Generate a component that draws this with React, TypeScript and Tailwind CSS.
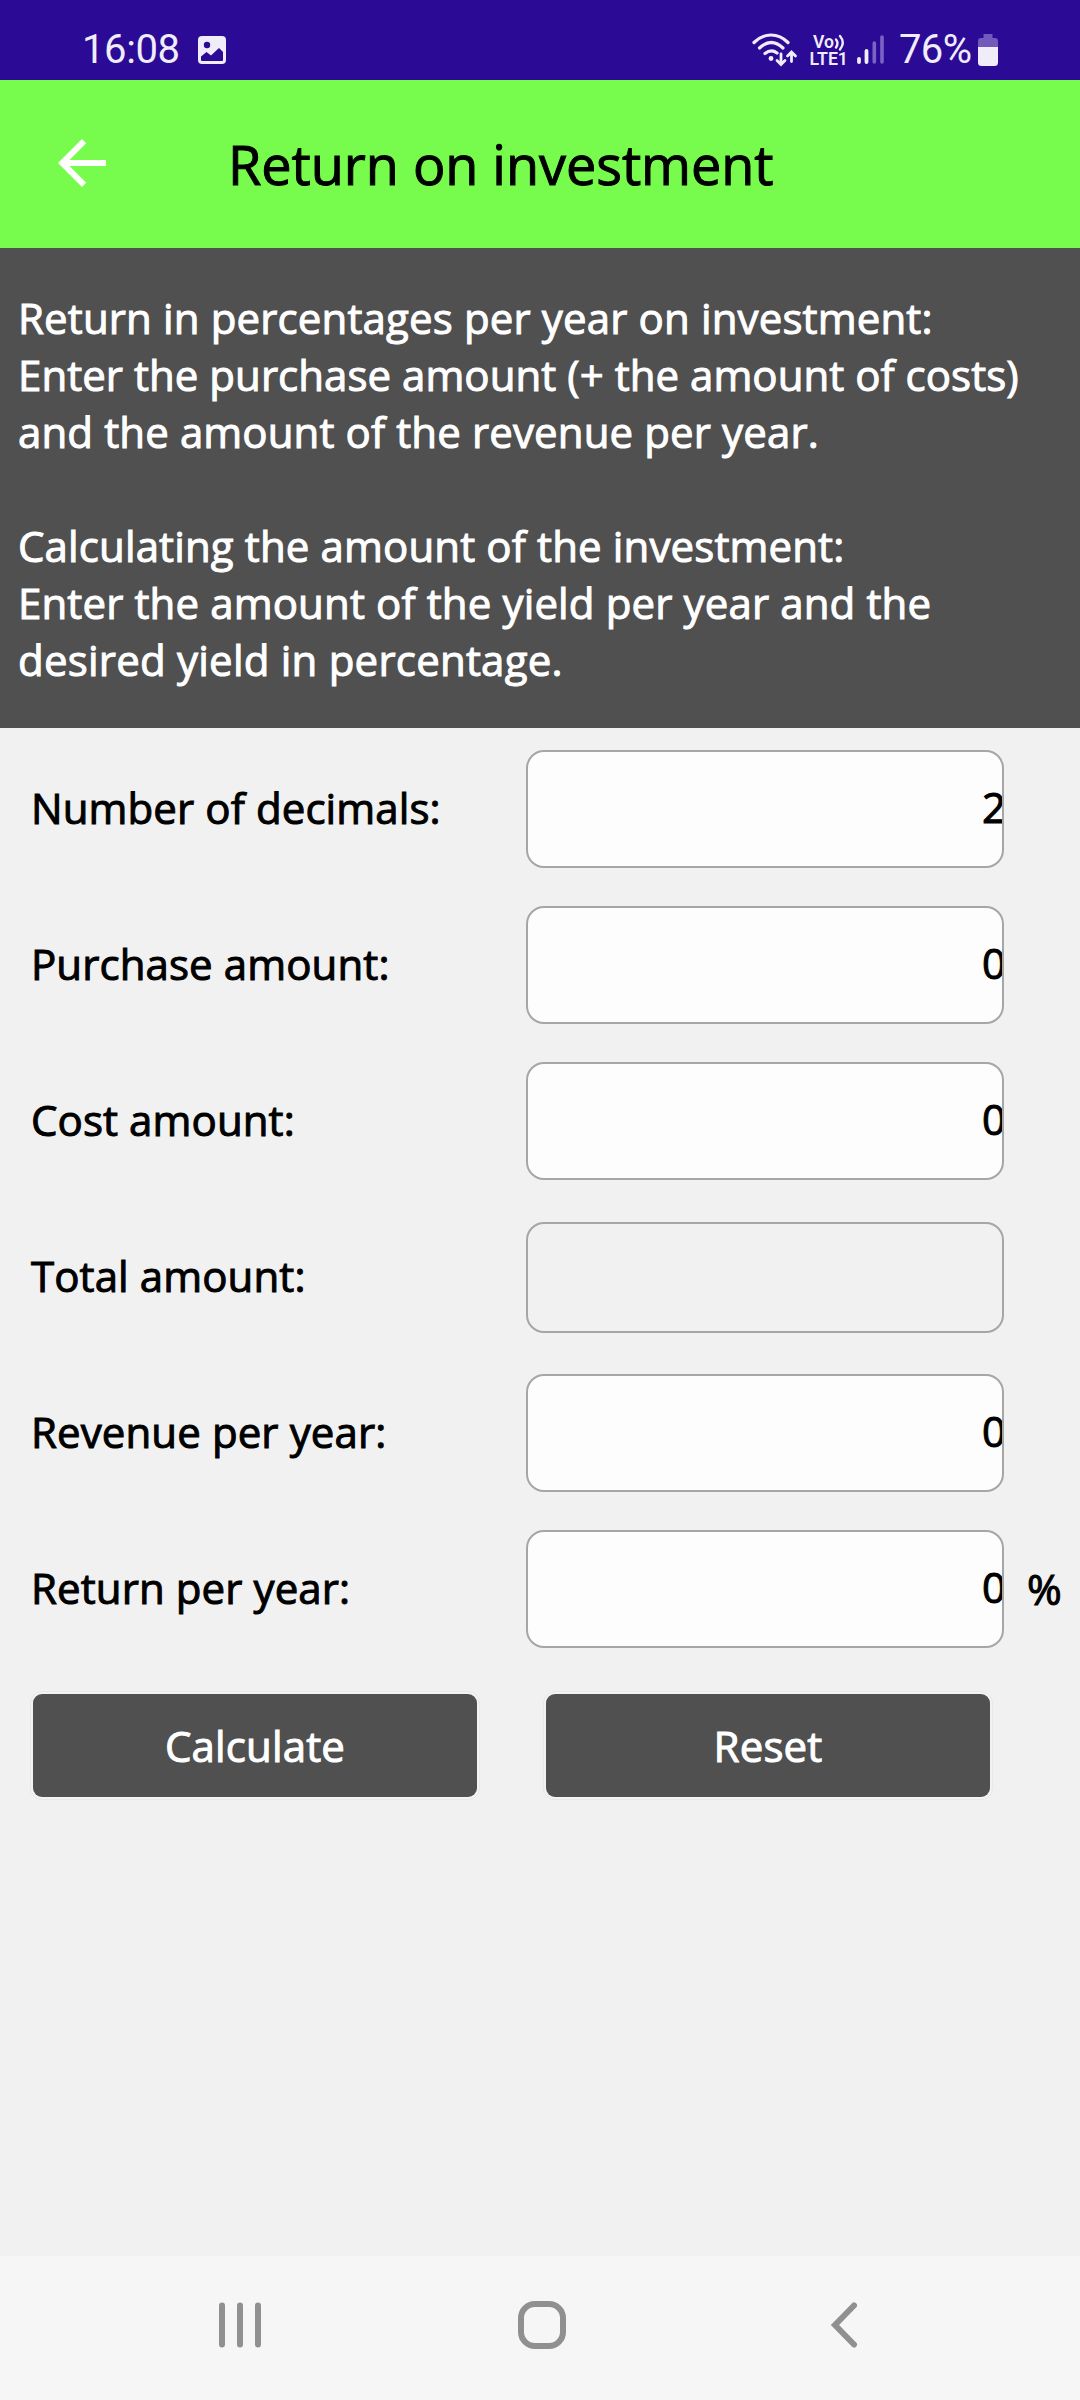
import React from 'react';

const fields = [
  { label: 'Number of decimals:', value: '2' },
  { label: 'Purchase amount:', value: '0' },
  { label: 'Cost amount:', value: '0' },
  { label: 'Total amount:', readOnly: true },
  { label: 'Revenue per year:', value: '0' },
  { label: 'Return per year:', value: '0', unit: '%' },
];

function StatusIcons() {
  return (
    <svg className="ml-auto mr-[72px] shrink-0" width="262" height="80" viewBox="746 0 262 80" fill="none" stroke="#f0ecfa" strokeLinecap="round">
      <path d="M754 42.500C764 32.500 778 32.500 788 42.500M759.500 48C767.500 40.500 775 40.500 783 48M765 53.500C769.500 50 773 50 777 53" strokeWidth="3.200" />
      <path d="M781 54v10M777 60.500l4 4 4-4M791.500 61.500v-9M787.500 56l4-4 4 4" strokeWidth="2.800" />
      <circle cx="771" cy="58.500" r="2.400" fill="#f0ecfa" stroke="none" />
      <g fill="#f0ecfa" stroke="none" fontFamily="Roboto, sans-serif" fontWeight="600">
        <text x="813" y="48" fontSize="17.500" textLength="21" lengthAdjust="spacingAndGlyphs">Vo</text>
        <text x="809.500" y="65" fontSize="18.500" textLength="38.500" lengthAdjust="spacingAndGlyphs">LTE1</text>
        <text x="899" y="63" fontSize="40" fontWeight="400" textLength="73">76%</text>
      </g>
      <path d="M836 39.500q3 3.500 0 8M840 36q5.500 6.500 0 13.500" strokeWidth="2.400" />
      <path d="M859 59v3M866.500 51v11" strokeWidth="3.800" />
      <path d="M874.300 43v19M882 37v25" strokeWidth="3.600" stroke="#7a63c4" />
      <path d="M983.500 34h9v4h2.500q3 0 3 3v6h-20v-6q0-3 3-3h2.500z" fill="#7259bb" stroke="none" />
      <path d="M978 47h20v15.500q0 3.500-3.500 3.500h-13q-3.500 0-3.500-3.500z" fill="#f0ecfa" stroke="none" />
    </svg>
  );
}

function ActionButton({ children }: { children: React.ReactNode }) {
  return (
    <button className="flex h-[109px] w-[450px] items-center justify-center rounded-[12px] border border-[#e8e8e8] bg-[#f3f3f3] p-[2px]">
      <span className="flex h-[103px] w-[444px] items-center justify-center rounded-[9px] bg-[#505050] text-white">
        <span className="-mt-px tracking-[0.15px]">{children}</span>
      </span>
    </button>
  );
}

export default function App() {
  return (
    <div className="flex h-[2400px] w-[1080px] flex-col overflow-hidden bg-[#f1f1f1] font-['Open_Sans',sans-serif] text-black [-webkit-text-stroke:1px_currentColor]">
      <div className="flex h-20 shrink-0 items-center bg-[#2b0a96] pl-[82px] font-['Roboto',sans-serif] text-[40px] text-[#f0ecfa] [-webkit-text-stroke:0px]">
        <span className="mt-[19px] w-[116px] tracking-[-0.4px]">16:08</span>
        <svg className="mt-5 shrink-0" width="28" height="28" viewBox="0 0 28 28">
          <rect width="28" height="28" rx="4" fill="#f0ecfa" />
          <circle cx="9" cy="9" r="3.200" fill="#2b0a96" />
          <path d="M3 20.500l5.500-4.500 4.500 3.500 8-7.500 4 4v8q0 1-1 1H4q-1 0-1-1z" fill="#2b0a96" />
        </svg>
        <StatusIcons />
      </div>
      <header className="flex h-[168px] shrink-0 items-center bg-[#77fc4d]">
        <svg className="-mt-[3px] ml-[46px] mr-[110px] shrink-0" width="72" height="72" viewBox="0 0 24 24" fill="#fff">
          <path d="M20 11H7.830l5.590-5.590L12 4l-8 8 8 8 1.410-1.410L7.830 13H20z" />
        </svg>
        <h1 className="text-[54px] tracking-[-0.05px]">Return on investment</h1>
      </header>
      <section className="h-[480px] shrink-0 bg-[#505050] pl-[18px] pt-[41px] text-[42px] leading-[57px] text-white">
        <p>
          <span className="tracking-[0.14px]">Return in percentages per year on investment:</span><br />
          <span className="tracking-[0.04px]">Enter the purchase amount (+ the amount of costs)</span><br />
          <span className="tracking-[0.12px]">and the amount of the revenue per year.</span>
        </p>
        <p className="mt-[57px] tracking-[0.13px]">
          Calculating the amount of the investment:<br />
          Enter the amount of the yield per year and the<br />
          <span className="tracking-[0.22px]">desired yield in percentage.</span>
        </p>
      </section>
      <main className="flex-1 pt-[3px] text-[42px]">
        {fields.map((f) => (
          <div key={f.label} className="flex h-[156px] items-center">
            <span className="-mt-[3px] ml-[31px] w-[495px] tracking-[0.1px]">{f.label}</span>
            {f.readOnly ? (
              <div className="h-[111px] w-[478px] rounded-[18px] border-2 border-[#a6a6a6]" />
            ) : (
              <div className="flex h-[118px] w-[478px] items-center justify-end overflow-hidden rounded-[18px] border-2 border-[#a6a6a6] bg-[#fdfdfd]">
                <span className="-mr-[4px] -mt-[5px]">{f.value}</span>
              </div>
            )}
            <span className="-mt-px ml-[23px]">{f.unit}</span>
          </div>
        ))}
        <div className="ml-[30px] mt-[24px] flex gap-[63px]">
          <ActionButton>Calculate</ActionButton>
          <ActionButton>Reset</ActionButton>
        </div>
      </main>
      <nav className="flex h-36 shrink-0 items-center bg-[#f6f6f6] pb-[6px] pl-[216px]">
        <svg width="48" height="48" viewBox="0 0 48 48" stroke="#909090" strokeWidth="6" strokeLinecap="round">
          <path d="M6 4.500v39M24 4.500v39M42 4.500v39" />
        </svg>
        <svg className="ml-[254px]" width="48" height="48" viewBox="0 0 48 48" fill="none" stroke="#909090" strokeWidth="6">
          <rect x="3" y="3" width="42" height="42" rx="14" />
        </svg>
        <svg className="ml-[262px]" width="30" height="48" viewBox="0 0 30 48" fill="none" stroke="#909090" strokeWidth="6" strokeLinecap="round">
          <path d="M26 4.500L7 24l19 19.500" />
        </svg>
      </nav>
    </div>
  );
}
